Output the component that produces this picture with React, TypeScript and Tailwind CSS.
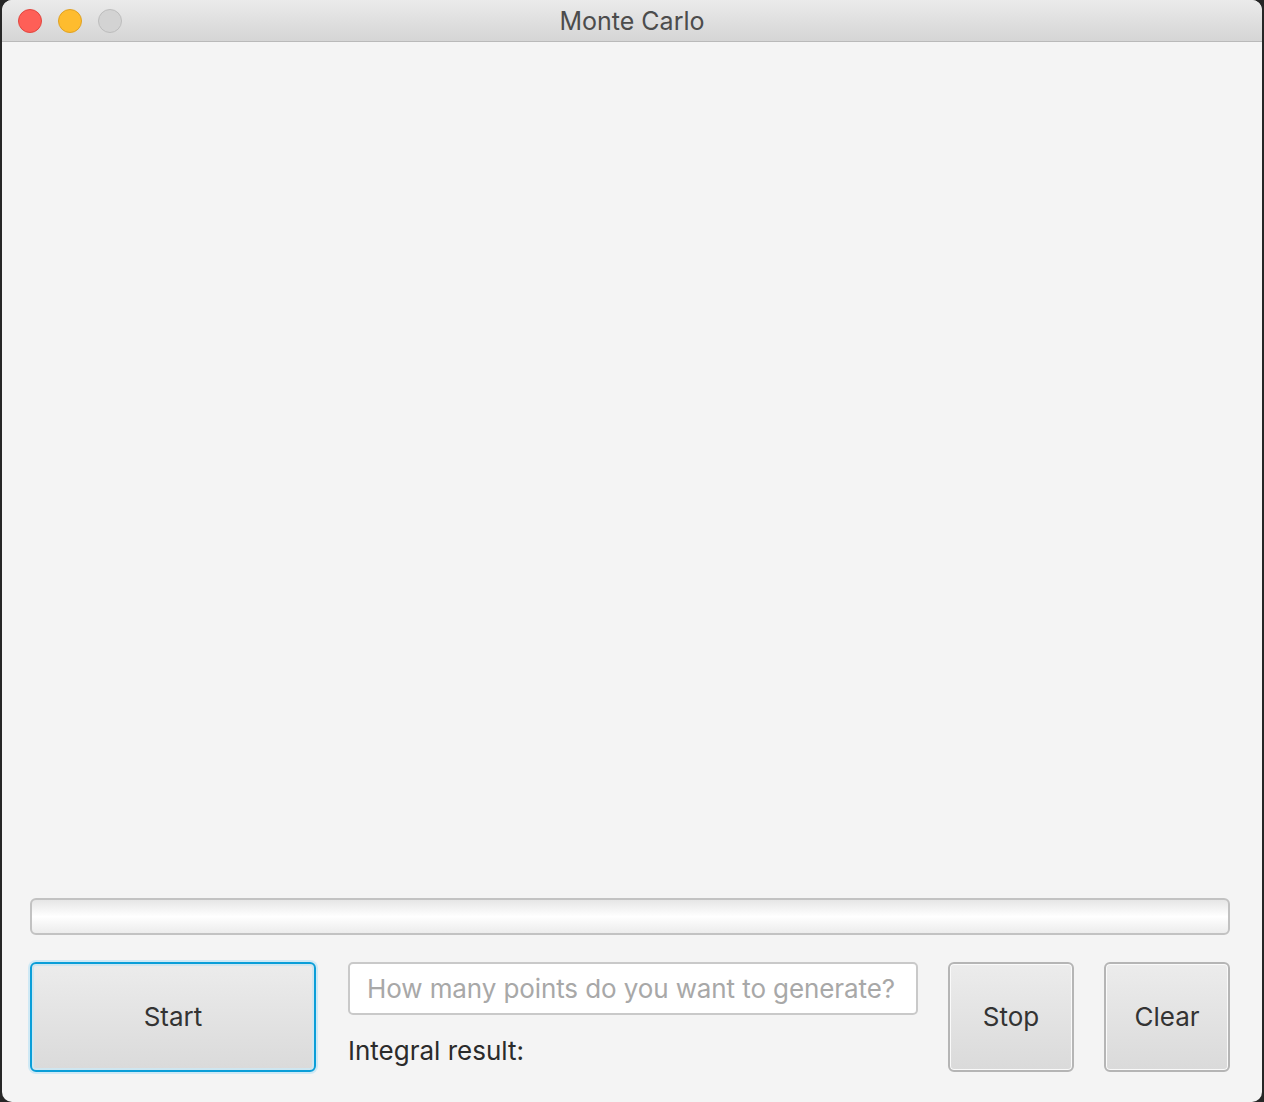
const font = { fontFamily: "Inter, 'Noto Sans', sans-serif" };

const TrafficLight = ({ color, ring }: { color: string; ring: string }) => (
  <span className={`block h-[24px] w-[24px] rounded-full border ${color} ${ring}`} />
);

const App = () => {
  return (
    <div className="h-[1102px] w-[1264px] overflow-hidden bg-[#262626]" style={font}>
      <div className="ml-[2px] flex h-[1102px] w-[1260px] flex-col overflow-hidden rounded-[10px] bg-[#f4f4f4]">
        {/* title bar */}
        <div className="relative flex h-[42px] shrink-0 items-center border-b border-[#b9b9b9] bg-gradient-to-b from-[#ebebeb] to-[#d5d5d5]">
          <div className="flex items-center gap-[16px] pl-[16px]">
            <TrafficLight color="bg-[#fe5f57]" ring="border-[#e1463f]" />
            <TrafficLight color="bg-[#febc2e]" ring="border-[#dfa123]" />
            <TrafficLight color="bg-[#d3d3d3]" ring="border-[#bcbcbc]" />
          </div>
          <div className="absolute inset-x-0 top-[1px] flex h-[41px] items-center justify-center text-[25px] text-[#4c4c4c]">
            Monte Carlo
          </div>
        </div>

        {/* canvas area */}
        <div className="flex-1" />

        {/* progress bar */}
        <div className="ml-[28px] h-[37px] w-[1200px] rounded-[6px] border-2 border-[#c2c2c2] bg-gradient-to-b from-[#e6e6e6] via-[#ffffff] to-[#ececec]" />

        {/* controls */}
        <div className="mt-[27px] mb-[30px] flex h-[110px] pl-[28px]">
          <button className="h-[110px] w-[286px] rounded-[6px] border-2 border-[#0a9ed8] bg-gradient-to-b from-[#ececec] to-[#dadada] pb-[2px] text-[26px] text-[#333333] shadow-[0_0_0_2px_#cfe9f5,inset_0_0_0_2px_#cfe6f0]">
            Start
          </button>
          <div className="ml-[32px] flex w-[570px] flex-col">
            <div className="flex h-[53px] items-center rounded-[5px] border-2 border-[#c9c9c9] bg-white pl-[17px] text-[26px] tracking-[-0.1px] text-[#a8a8a8]">
              How many points do you want to generate?
            </div>
            <div className="mt-[19px] text-[26px] leading-[34px] text-[#2b2b2b]">Integral result:</div>
          </div>
          <button className="ml-[30px] h-[110px] w-[126px] rounded-[6px] border-2 border-[#b5b5b5] bg-gradient-to-b from-[#ececec] to-[#dadada] pb-[2px] text-[26px] text-[#333333] shadow-[inset_0_0_0_1px_#fafafa]">
            Stop
          </button>
          <button className="ml-[30px] h-[110px] w-[126px] rounded-[6px] border-2 border-[#b5b5b5] bg-gradient-to-b from-[#ececec] to-[#dadada] pb-[2px] text-[26px] text-[#333333] shadow-[inset_0_0_0_1px_#fafafa]">
            Clear
          </button>
        </div>
      </div>
    </div>
  );
};

export default App;
